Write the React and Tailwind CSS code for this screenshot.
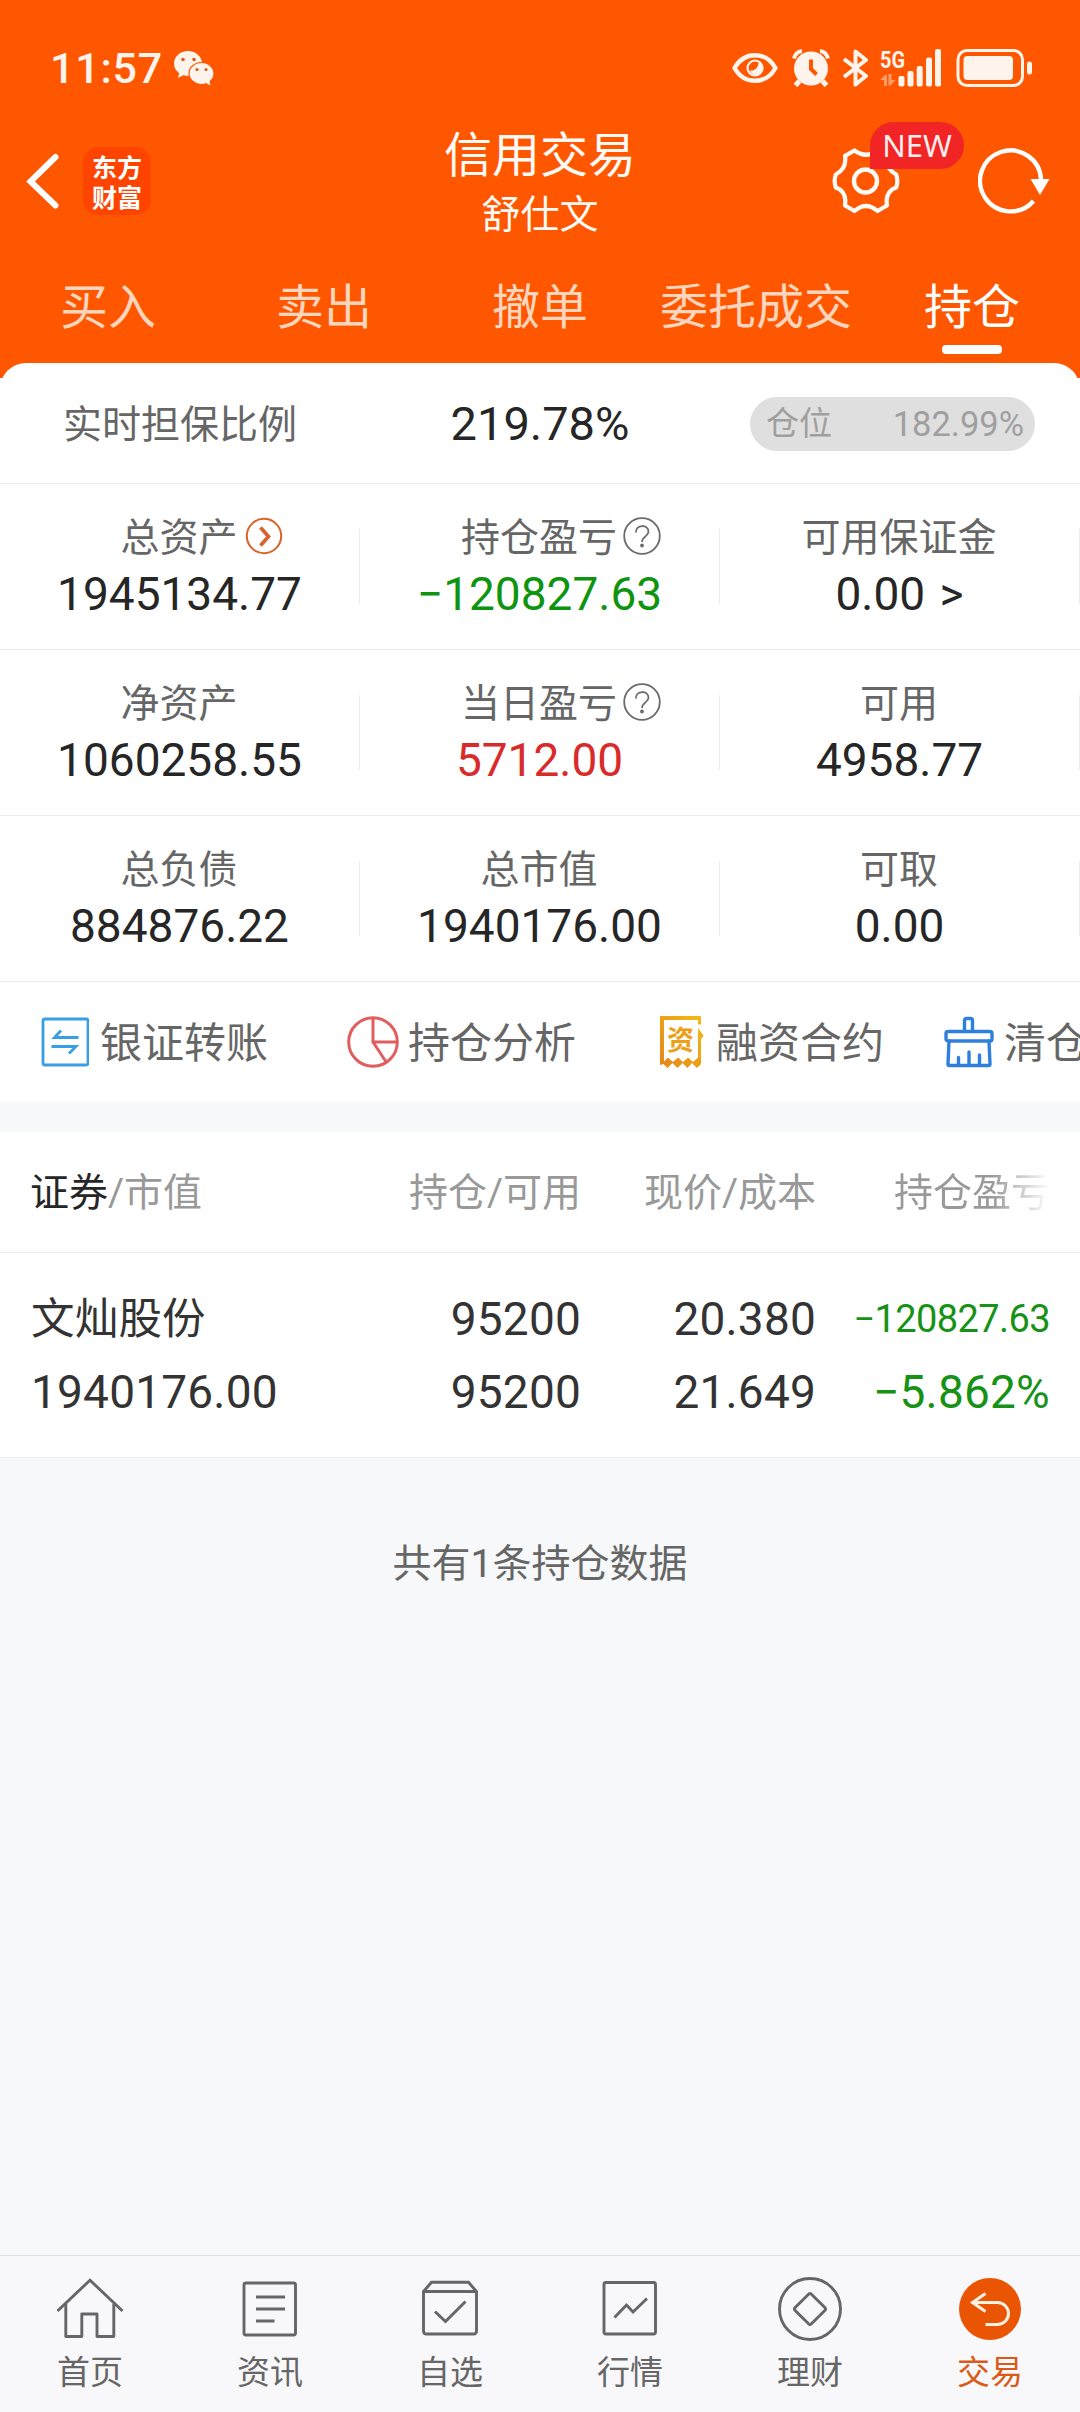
import clsx from 'clsx';

const tabs = ['买入', '卖出', '撤单', '委托成交', '持仓'];

const assetRows = [
  [
    { label: '总资产', value: '1945134.77', icon: 'arrow' },
    { label: '持仓盈亏', value: '-120827.63', icon: 'help', color: 'text-[#0f940f]' },
    { label: '可用保证金', value: '0.00 >' },
  ],
  [
    { label: '净资产', value: '1060258.55' },
    { label: '当日盈亏', value: '5712.00', icon: 'help', color: 'text-[#d92b2b]' },
    { label: '可用', value: '4958.77' },
  ],
  [
    { label: '总负债', value: '884876.22' },
    { label: '总市值', value: '1940176.00' },
    { label: '可取', value: '0.00' },
  ],
];

/* Status bar */
const WechatIcon = () => (
  <svg className="w-[42px] h-9" viewBox="0 0 42 36" fill="#fff4ec">
    <path d="M15 1C7.300 1 1 6.500 1 13.500c0 4 2 7.400 5.200 9.700L5 28l5.300-2.700c1.500.4 3 .7 4.700.7 7.700 0 14-5.500 14-12.500S22.700 1 15 1z" />
    <ellipse cx="28.500" cy="23.500" rx="12.500" ry="11" stroke="#ff5600" strokeWidth="1.200" />
    <path d="M33 33l4.500 2.500-1.200-5z" />
    <g fill="#e05a1c">
      <circle cx="10" cy="9.500" r="1.800" />
      <circle cx="21" cy="9.500" r="1.800" />
      <circle cx="24" cy="19.500" r="1.600" />
      <circle cx="33" cy="19.500" r="1.600" />
    </g>
  </svg>
);

const EyeIcon = () => (
  <svg className="w-[46px] h-[30px]" viewBox="0 0 46 30" fill="none" stroke="#fff4ec">
    <path d="M2.500 15C7 7 14.500 2.200 23 2.200S39 7 43.500 15C39 23 31.500 27.800 23 27.800S7 23 2.500 15z" strokeWidth="4.400" strokeLinejoin="round" />
    <circle cx="23" cy="15" r="7.500" strokeWidth="2.200" />
    <path d="M26.500 9.500a6.500 6.500 0 1 1-8.500 8c5 .5 8.500-3 8.500-8z" fill="#fff4ec" stroke="none" />
  </svg>
);

const AlarmIcon = () => (
  <svg className="w-[38px] h-[38px]" viewBox="0 0 38 38" fill="none" stroke="#fff4ec">
    <circle cx="19" cy="19.500" r="17" fill="#fff4ec" stroke="none" />
    <path d="M2 9.500C3 5.500 6 2.500 10 2M36 9.500C35 5.500 32 2.500 28 2" strokeWidth="4" />
    <path d="M7.500 32L3.500 36.500M30.500 32L34.500 36.500" strokeWidth="5" />
    <path d="M19 10.500V20l5.500 5.500" stroke="#ff5600" strokeWidth="4" />
  </svg>
);

const BluetoothIcon = () => (
  <svg className="w-[26px] h-[38px]" viewBox="0 0 26 38" fill="none" stroke="#fff4ec" strokeWidth="4" strokeLinejoin="round">
    <path d="M1 10L23 27 12.500 35.500V2.500L23 11 1 28" />
  </svg>
);

const SignalIcon = () => (
  <svg className="w-[62px] h-[38px] overflow-visible" viewBox="0 0 62 38" fill="#fff4ec">
    <text x="0" y="18.500" fontSize="24.500" fontWeight="700" textLength="25" lengthAdjust="spacingAndGlyphs">5G</text>
    <path d="M0 31l5-5h2v11H4v-6zM15.500 31l-5 5.500H8.500V25h3v6z" opacity=".45" />
    <rect x="18.500" y="27" width="6" height="10.500" rx="2" />
    <rect x="27.500" y="22" width="6" height="15.500" rx="2" />
    <rect x="36.700" y="17" width="6" height="20.500" rx="2" />
    <rect x="46" y="8.500" width="6" height="29" rx="2" />
    <rect x="55" y="0" width="6" height="37.500" rx="2" />
  </svg>
);

const BatteryIcon = () => (
  <svg className="w-[77px] h-[38px]" viewBox="0 0 77 38" fill="#fff4ec">
    <rect x="2" y="1.500" width="64.500" height="35" rx="9" fill="none" stroke="#fff4ec" strokeWidth="3" />
    <rect x="7.500" y="7" width="49.500" height="24" rx="4" />
    <rect x="71" y="12.500" width="5" height="13" rx="2.500" />
  </svg>
);

/* Title bar */
const GearIcon = () => (
  <svg className="w-[68px] h-[68px]" viewBox="0 0 68 68" fill="none" stroke="#fffaf5" strokeWidth="4.200" strokeLinejoin="round">
    <path d="M22.500 3.500L13 8.800C14.500 17.500 11 23.500 3.800 27.500Q1.500 34 3.800 40.500C11 43 14.500 49 13 58.500L22.500 64Q34 54 45.500 64L55 58.500C53.500 49 57 43 64.200 40.500Q66.500 34 64.200 27.500C57 23.500 53.500 17.500 55 8.800L45.500 3.500Q34 12 22.500 3.500z" />
    <circle cx="33.500" cy="34" r="11.500" strokeWidth="4.400" />
  </svg>
);

const RefreshIcon = () => (
  <svg className="w-[72px] h-[66px]" viewBox="0 0 72 66" fill="none" stroke="#fff" strokeWidth="4.400">
    <path d="M55.500 53A30.500 30.500 0 1 1 63 31" />
    <path d="M52.500 31H71.500L62 47z" fill="#fff" stroke="none" />
  </svg>
);

/* Quick actions */
const TransferIcon = () => (
  <svg className="w-[48px] h-[50px]" viewBox="0 0 48 50" fill="none" stroke="#3a9ee4" strokeWidth="2.800">
    <rect x="2" y="2" width="45" height="46" rx="2" />
    <path d="M37.500 20.500H13.500l6.500-7M10.500 29.500H35l-7 7" />
  </svg>
);

const PieIcon = () => (
  <svg className="w-[52px] h-[52px]" viewBox="0 0 52 52" fill="none" stroke="#e05e5e" strokeWidth="3">
    <circle cx="26" cy="26" r="24.300" />
    <path d="M26 2V26H50M26 26l13.500 20.500" />
  </svg>
);

const ContractIcon = () => (
  <svg className="w-[44px] h-[52px]" viewBox="0 0 44 52">
    <defs>
      <linearGradient id="gold" x1="0" y1="1" x2="1" y2="0">
        <stop offset="0" stopColor="#e6841a" />
        <stop offset="1" stopColor="#f4bc14" />
      </linearGradient>
    </defs>
    <path fill="url(#gold)" d="M0 0H41V8.500H38V4H4V45.500L8 41.500L13 46L18 41.500L23 46L28 41.500L33 46L38 41.500V12L43.500 19.500L41 23.500V48L37 52L32 47L27.500 52L22.500 47L17.500 52L12.500 47L7.500 52L3.500 48L0 49z" />
    <text x="7" y="33.500" fontSize="27" fontWeight="700" fill="#eca016">资</text>
  </svg>
);

const BroomIcon = () => (
  <svg className="w-[50px] h-[52px]" viewBox="0 0 50 52" fill="none" stroke="#2f80dc" strokeWidth="3.400" strokeLinejoin="round" strokeLinecap="round">
    <path d="M20.500 15V4.500q0-2 2-2h4q2 0 2 2V15" />
    <rect x="2" y="15.500" width="46" height="9.500" rx="2" />
    <path d="M5 25L4 48q0 1.500 1.500 1.500h39q1.500 0 1.500-1.500L45 25M14.500 41.500V49M25 36V49M35.500 39V49" />
  </svg>
);

const actions = [
  { label: '银证转账', icon: TransferIcon, box: 'ml-[41px] gap-[11px]' },
  { label: '持仓分析', icon: PieIcon, box: 'ml-[79px] gap-[9px]' },
  { label: '融资合约', icon: ContractIcon, box: 'ml-[84px] gap-[12px]' },
  { label: '清仓', icon: BroomIcon, box: 'ml-[60px] gap-[10px]' },
];

/* Bottom navigation */
const HomeIcon = () => (
  <g>
    <path d="M.500 35L33 4.200L65.500 35" />
    <path d="M8.800 28V60.500H24.800V38H40V60.500H56.800V28" strokeLinejoin="round" />
  </g>
);

const NewsIcon = () => (
  <g>
    <rect x="7" y="7" width="51.500" height="52" rx="2" />
    <path d="M19 21H48M19 33H48M19 45H37.500" />
  </g>
);

const WatchIcon = () => (
  <g>
    <path d="M6.500 15.500L14.500 6.300H51.500L59.500 15.500V55q0 3-3 3H9.500q-3 0-3-3zM6.500 15.500H59.500" />
    <path d="M18 35.500L28.500 45.500L48.500 25.500" />
  </g>
);

const MarketIcon = () => (
  <g>
    <rect x="7" y="6.500" width="51.500" height="51.500" rx="2" />
    <path d="M17.500 41.500L29.500 29L36 36L50 22.500" />
  </g>
);

const FinanceIcon = () => (
  <g>
    <circle cx="33" cy="33" r="30.500" />
    <rect x="21.500" y="21.500" width="23" height="23" rx="2" transform="rotate(45 33 33)" />
  </g>
);

const TradeIcon = () => (
  <g>
    <circle cx="33" cy="33" r="31" fill="#ea5504" stroke="none" />
    <path stroke="#fff0e2" strokeWidth="3" d="M28.500 17.500L15.500 26.500L28.500 35.500M15.500 26.500H40.500a11 11 0 0 1 0 22H28.500" />
  </g>
);

const navItems = [
  { label: '首页', icon: HomeIcon },
  { label: '资讯', icon: NewsIcon },
  { label: '自选', icon: WatchIcon },
  { label: '行情', icon: MarketIcon },
  { label: '理财', icon: FinanceIcon },
  { label: '交易', icon: TradeIcon, active: true },
];

const LabelIcon = ({ type }) =>
  type === 'arrow' ? (
    <svg className="absolute left-full top-0 ml-[7px] w-[38px] h-[38px]" viewBox="0 0 38 38" fill="none" stroke="#d9622b">
      <circle cx="19" cy="19" r="17.200" strokeWidth="2" />
      <path d="M15.500 10.500L23.500 19.500L15.500 28.500" strokeWidth="3.600" />
    </svg>
  ) : (
    <svg className="absolute left-full top-0 ml-[6px] w-[38px] h-[38px]" viewBox="0 0 38 38" fill="none" stroke="#6b6b6b" strokeWidth="1.800">
      <circle cx="19" cy="19" r="17.800" />
      <path d="M12.800 15.500c0-8.500 12.700-8.500 12.700-.8 0 4.500-6.500 5-6.500 10.300" />
      <circle cx="19" cy="28.500" r="1" fill="#6b6b6b" />
    </svg>
  );

const AssetCell = ({ label, value, icon, color }) => (
  <div className="relative flex flex-col items-center w-[360px] pt-[33px]">
    <div className="relative -ml-[2px] text-[39px] leading-[42px] text-[#666]">
      {label}
      {icon && <LabelIcon type={icon} />}
    </div>
    <div className={clsx('mt-[8px] -ml-[1px] text-[46px] leading-[54px] [word-spacing:3px]', color || 'text-[#262626]')}>
      {value[0] === '-' ? '−' + value.slice(1) : value}
    </div>
    <div className="absolute right-0 top-[45px] w-px h-[75px] bg-[#ececec]" />
  </div>
);

const App = () => {
  return (
    <div className="flex flex-col w-[1080px] h-[2412px] overflow-hidden bg-[#f7f8fa] font-['Roboto','Noto_Sans_CJK_SC',sans-serif]">
      {/* Header */}
      <header className="h-[378px] shrink-0 bg-[#ff5600]">
        <div className="flex items-center h-[136px] pl-[50px]">
          <span className="w-[123px] text-[43px] leading-none font-medium tracking-[0.8px] text-[#fff4ec]">11:57</span>
          <WechatIcon />
          <div className="flex items-center ml-[517px]">
            <EyeIcon />
            <div className="ml-[14px]"><AlarmIcon /></div>
            <div className="ml-[13px]"><BluetoothIcon /></div>
            <div className="ml-[11px]"><SignalIcon /></div>
            <div className="ml-[14px]"><BatteryIcon /></div>
          </div>
        </div>

        <div className="flex h-[120px]">
          <div className="flex w-[360px] pl-[26px] pt-[11px]">
            <svg className="w-[34px] h-[68px]" viewBox="0 0 34 68" fill="none" stroke="#fff" strokeWidth="6" strokeLinecap="round">
              <path d="M29.500 10L4.500 34.500L29.500 58.500" />
            </svg>
            <div className="flex flex-col justify-center ml-[23px] w-[68px] h-[68px] rounded-[15px] bg-[#ff4400] text-center text-[25px] leading-[30px] font-bold text-white font-['Noto_Sans_CJK_SC',sans-serif]">
              <span>东方</span>
              <span>财富</span>
            </div>
          </div>
          <div className="flex flex-col items-center w-[360px] text-[#fffaf5]">
            <h1 className="-mt-[10px] text-[48px] leading-[60px]">信用交易</h1>
            <p className="mt-[6px] text-[39px] leading-[46px]">舒仕文</p>
          </div>
          <div className="flex w-[360px]">
            <div className="relative ml-[112px] mt-[11px] w-[68px] h-[68px]">
              <GearIcon />
              <span className="absolute left-[38px] -top-[25px] w-[94px] h-[47px] rounded-[24px] rounded-bl-none bg-[#f12525] text-center font-['Noto_Sans',sans-serif] text-[31px] leading-[46px] text-[#ffeef0]">NEW</span>
            </div>
            <div className="ml-[78px] mt-[12px]"><RefreshIcon /></div>
          </div>
        </div>

        <nav className="flex">
          {tabs.map((tab) => (
            <div key={tab} className="flex flex-col items-center w-[216px] pt-5">
              <span className={clsx('text-[48px] leading-[64px] whitespace-nowrap', tab === '持仓' ? 'text-white' : 'text-[#ffd6bd]')}>{tab}</span>
              {tab === '持仓' && <span className="mt-[5px] w-[60px] h-[9px] rounded-[4px] bg-white" />}
            </div>
          ))}
        </nav>
      </header>

      {/* Assets */}
      <section className="bg-white">
        <div className="relative -mt-[15px] rounded-t-[26px] bg-white">
          <div className="flex items-center h-[121px] pt-[2px] border-b border-[#ececec]">
            <span className="w-[360px] pl-[63px] pt-[2px] text-[39px] text-[#666]">实时担保比例</span>
            <span className="w-[360px] text-center text-[47px] text-[#262626]">219.78%</span>
            <div className="flex items-center justify-between ml-[30px] w-[285px] h-[54px] pl-4 pr-[11px] rounded-full bg-[#dfdfdf] text-[#9f9f9f]">
              <span className="text-[33px]">仓位</span>
              <span className="pt-px text-[34.5px]">182.99%</span>
            </div>
          </div>
          {assetRows.map((row) => (
            <div key={row[0].label} className="flex h-[166px] border-b border-[#ececec]">
              {row.map((cell) => (
                <AssetCell key={cell.label} {...cell} />
              ))}
            </div>
          ))}
          <div className="flex items-center h-[120px] overflow-hidden">
            {actions.map(({ label, icon: Icon, box }) => (
              <div key={label} className={clsx('flex items-center shrink-0', box)}>
                <Icon />
                <span className="pt-[3px] text-[42px] leading-[48px] text-[#666] whitespace-nowrap">{label}</span>
              </div>
            ))}
          </div>
        </div>
      </section>

      {/* Positions */}
      <section className="mt-[30px] bg-white">
        <div className="flex items-center h-[121px] pt-[3px] border-b border-[#ececec] text-[39px] text-[#999]">
          <span className="w-[320px] pl-[30px]"><span className="text-[#262626]">证券</span>/市值</span>
          <span className="w-[261px] text-right">持仓/可用</span>
          <span className="w-[235px] text-right">现价/成本</span>
          <span className="w-[234px] text-right bg-linear-to-r from-[#999] from-75% to-white to-100% bg-clip-text text-transparent">持仓盈亏</span>
        </div>
        <div className="flex h-[205px] pt-[30px] border-b border-[#ececec] text-[46px] leading-[73px] tracking-[0.2px] text-[#333]">
          <div className="w-[320px] pl-[31px]">
            <p className="text-[43.500px]">文灿股份</p>
            <p>1940176.00</p>
          </div>
          <div className="w-[261px] text-right">
            <p>95200</p>
            <p>95200</p>
          </div>
          <div className="w-[235px] text-right">
            <p>20.380</p>
            <p>21.649</p>
          </div>
          <div className="w-[234px] text-right text-[#169216]">
            <p className="text-[38px] tracking-[-0.6px]">−120827.63</p>
            <p>−5.862%</p>
          </div>
        </div>
      </section>

      <p className="mt-[78px] text-center text-[39px] leading-[56px] text-[#666]">共有1条持仓数据</p>

      {/* Bottom navigation */}
      <footer className="flex mt-auto h-[157px] shrink-0 border-t border-[#dde0e2] bg-[#f8f8fb]">
        {navItems.map(({ label, icon: Icon, active }) => (
          <div key={label} className="flex flex-col items-center w-[180px] pt-5">
            <svg className="-ml-[1px] w-[66px] h-[66px]" viewBox="0 0 66 66" fill="none" stroke="#666" strokeWidth="2.900">
              <Icon />
            </svg>
            <span className={clsx('mt-[10px] text-[33px] leading-[42px]', active ? 'text-[#d95b17]' : 'text-[#666]')}>{label}</span>
          </div>
        ))}
      </footer>
    </div>
  );
};

export default App;
